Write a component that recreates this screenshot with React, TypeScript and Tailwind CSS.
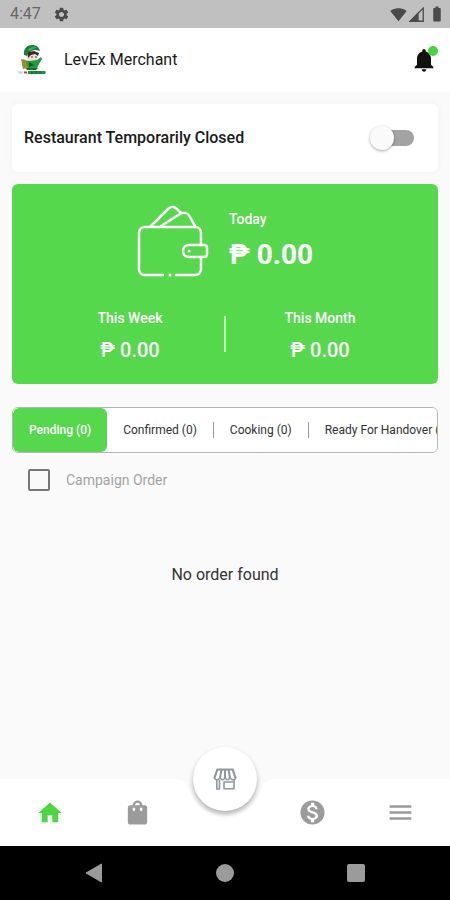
import { useState } from "react";
import type { ReactNode } from "react";
import {
  MdBatteryFull,
  MdHome,
  MdMenu,
  MdMonetizationOn,
  MdNotifications,
  MdSettings,
  MdShoppingBag,
  MdSignalWifi4Bar,
} from "react-icons/md";

function SignalIcon() {
  return (
    <svg width="15" height="15" viewBox="0 0 14 14" aria-hidden="true">
      <path d="M13.3 1v12.3H1z" fill="none" stroke="#4a4a4a" strokeWidth="1.2" />
      <path d="M9 4.5V14H0z" fill="#4a4a4a" />
    </svg>
  );
}

function StatusBar() {
  return (
    <div className="flex h-7 items-center justify-between bg-[#c0c0c0] pr-1 pl-2.5 text-[#4a4a4a]">
      <div className="flex items-center gap-3">
        <span className="text-base text-[#666]">4:47</span>
        <MdSettings size={17} />
      </div>
      <div className="flex items-center gap-0.5">
        <MdSignalWifi4Bar size={17} />
        <SignalIcon />
        <MdBatteryFull size={18} className="ml-0.5" />
      </div>
    </div>
  );
}

function LogoMark() {
  return (
    <svg width="32" height="34" viewBox="0 0 32 34" role="img" aria-label="LevEx logo">
      <path d="M10 13c2-3 11-3 12 1l-2 5-8 1z" fill="#f3dfd2" />
      <path d="M8 12C7 5 12 2 16 2c4 0 7 2 8 6l-4-1c-5 0-6 2-9 6z" fill="#17813a" />
      <path d="M12 7c2-3 6-4 9-2-3 0-6 1-7 3z" fill="#3cb45a" />
      <path d="M12 9l6-1 5 2-1 3-3-2-4 1-3 3z" fill="#43262a" />
      <path d="M15 14l2 0M19 14h2" stroke="#5a3a35" strokeWidth="1" />
      <path d="M7 17l6 1 8-1 4-3 1 2-3 5-2 4H9l-3-3z" fill="#249b3f" />
      <path d="M5 16l5 1 2 8-5 1z" fill="#9a8d2c" />
      <path d="M13 19l5 3-5 2z" fill="#0f5b28" />
      <path d="M10 25h12l-2 2h-9z" fill="#1c6b31" />
      <path d="M2 29h5M3 30h3" stroke="#b9c9bd" strokeWidth="1" />
      <path d="M8 28.5h3v2H8z" fill="#d6353a" />
      <path d="M12 28h17l1 1-1 2H12z" fill="#1f9440" />
      <path d="M16 28v3M20 28v3M24 28v3" stroke="#0d5c25" strokeWidth="1" />
    </svg>
  );
}

function Header() {
  return (
    <header className="flex h-16 items-center bg-white pr-3 pl-4">
      <LogoMark />
      <h1 className="ml-4 flex-1 text-base text-[#1a1a1a]">LevEx Merchant</h1>
      <button type="button" aria-label="Notifications" className="relative text-[#111]">
        <MdNotifications size={28} />
        <span className="absolute top-0 right-0 size-2.5 rounded-full bg-[#43d63f]" />
      </button>
    </header>
  );
}

function ClosedSwitch() {
  const [closed, setClosed] = useState(false);
  return (
    <label className="flex h-17 items-center justify-between rounded-md bg-white pr-6 pl-3 shadow-[0_0_8px_rgba(0,0,0,0.04)]">
      <span className="text-base font-medium text-[#1a1a1a]">Restaurant Temporarily Closed</span>
      <span className="relative flex h-6 w-11 items-center">
        <input
          type="checkbox"
          role="switch"
          checked={closed}
          onChange={(e) => setClosed(e.target.checked)}
          className="peer ml-1 h-4 w-10 appearance-none rounded-full bg-[#a3a3a3] checked:bg-[#9be698]"
        />
        <span className="pointer-events-none absolute top-0 left-0 size-6 rounded-full bg-[#fafafa] shadow-[0_1px_3px_rgba(0,0,0,0.35)] peer-checked:right-0 peer-checked:left-auto" />
      </span>
    </label>
  );
}

function WalletIcon() {
  return (
    <svg width="72" height="72" viewBox="0 0 72 72" fill="none" stroke="white" strokeWidth="2.5" strokeLinecap="round" strokeLinejoin="round" aria-hidden="true">
      <path d="M26 70H8c-4 0-6-3-6-6V28c0-4 3-6 6-6h50c4 0 6 3 6 6v12M64 52v12c0 4-3 6-6 6H39" />
      <path d="M33 70h.1" strokeWidth="3" />
      <path d="M14 21 31 4c3-3 6-3 9 0l4 4" />
      <path d="M24 21 43 9c4-2 8-1 10 3l5 9" />
      <path d="M52 40h15c2 0 3 1 3 3v6c0 2-1 3-3 3H52c-3 0-6-2-6-6s3-6 6-6z" />
      <path d="M52 46h.1" strokeWidth="3" />
    </svg>
  );
}

function PeriodTotal({ label, value }: { label: string; value: string }) {
  return (
    <div className="flex flex-1 flex-col items-center gap-2">
      <span className="text-sm leading-6 font-medium">{label}</span>
      <span className="text-xl leading-6 font-medium">{value}</span>
    </div>
  );
}

function EarningsCard() {
  return (
    <section className="rounded-md bg-[#56d84d] pt-[21px] pb-[22px] text-white">
      <div className="flex items-center justify-center gap-5">
        <WalletIcon />
        <div className="flex flex-col gap-1">
          <span className="text-sm leading-6 font-medium">Today</span>
          <span className="text-[28px] leading-10 font-bold">₱ 0.00</span>
        </div>
      </div>
      <div className="mt-[29px] flex items-center px-6">
        <PeriodTotal label="This Week" value="₱ 0.00" />
        <div className="h-9 w-0.5 bg-white/60" />
        <PeriodTotal label="This Month" value="₱ 0.00" />
      </div>
    </section>
  );
}

const tabs = ["Pending (0)", "Confirmed (0)", "Cooking (0)", "Ready For Handover (0)"];

function OrderTabs() {
  const [active, setActive] = useState(0);
  return (
    <div
      role="tablist"
      className="flex h-[46px] items-center overflow-x-auto rounded-md border border-[#b5b5b5] bg-white [scrollbar-width:none]"
    >
      {tabs.map((tab, i) => (
        <div key={tab} className="flex h-full shrink-0 items-center">
          {i > 1 && <span className="h-4 w-px bg-[#9a9a9a]" />}
          <button
            type="button"
            role="tab"
            aria-selected={i === active}
            onClick={() => setActive(i)}
            className={
              i === active
                ? "h-full rounded-md bg-[#56d84d] px-4 text-xs font-medium text-white"
                : "h-full px-4 text-xs text-[#333]"
            }
          >
            {tab}
          </button>
        </div>
      ))}
    </div>
  );
}

function StoreIcon() {
  return (
    <svg width="24" height="24" viewBox="0 0 24 24" fill="none" stroke="#8f989c" aria-hidden="true">
      <path d="M4 2.5h16M4.500 2 1.500 11M19.500 2l3 9" strokeWidth="2.200" />
      <path d="M8.500 2.500 7 11M12 2.500V11M15.500 2.500 17 11" strokeWidth="2" />
      <path d="M1 10.500c1 3 5 3 6 0 1 3 4 3 5 0 1 3 4 3 5 0 1 3 5 3 6 0" strokeWidth="1.400" />
      <path d="M3.800 12v10.500M6.500 13v9.500M3 22h4" strokeWidth="1.600" />
      <path d="M11 14.500V21.800h10V12.500M11 15h9" strokeWidth="1.600" />
    </svg>
  );
}

function NavButton({ label, active, children }: { label: string; active?: boolean; children: ReactNode }) {
  return (
    <button
      type="button"
      aria-label={label}
      className={active ? "flex items-center justify-center text-[#4ad842]" : "flex items-center justify-center text-[#9b9b9b]"}
    >
      {children}
    </button>
  );
}

function BottomNav() {
  return (
    <nav className="relative h-[67px]">
      <div className="absolute inset-0 flex" aria-hidden="true">
        <div className="flex-1 bg-white" />
        <svg width="104" height="67" viewBox="0 0 104 67">
          <path d="M0 0c9 0 14 4 16 10 5 16 19 27 36 27s31-11 36-27c2-6 7-10 16-10v67H0z" fill="white" />
        </svg>
        <div className="flex-1 bg-white" />
      </div>
      <div className="relative grid h-full grid-cols-5 px-1.5">
        <NavButton label="Home" active>
          <MdHome size={28} />
        </NavButton>
        <NavButton label="Orders">
          <MdShoppingBag size={29} />
        </NavButton>
        <div className="flex justify-center">
          <button
            type="button"
            aria-label="Store"
            className="-mt-8 flex size-16 items-center justify-center rounded-full bg-white shadow-[0_3px_5px_rgba(0,0,0,0.3)]"
          >
            <StoreIcon />
          </button>
        </div>
        <NavButton label="Earnings">
          <MdMonetizationOn size={29} />
        </NavButton>
        <NavButton label="Menu">
          <MdMenu size={29} />
        </NavButton>
      </div>
    </nav>
  );
}

function SystemBar() {
  return (
    <div className="grid h-[54px] grid-cols-3 bg-black px-7">
      <button type="button" aria-label="Back" className="flex items-center justify-center">
        <svg width="18" height="20" viewBox="0 0 18 20">
          <path d="M16.5 1v18L1 10z" fill="#9b9b9b" stroke="#9b9b9b" strokeLinejoin="round" />
        </svg>
      </button>
      <button type="button" aria-label="Home screen" className="flex items-center justify-center">
        <span className="size-[18px] rounded-full bg-[#9b9b9b]" />
      </button>
      <button type="button" aria-label="Recent apps" className="flex items-center justify-center">
        <span className="size-[18px] rounded-xs bg-[#9b9b9b]" />
      </button>
    </div>
  );
}

export default function App() {
  return (
    <div className="flex min-h-screen flex-col bg-[#fafafa] font-['Roboto',sans-serif]">
      <StatusBar />
      <Header />
      <main className="flex flex-1 flex-col px-3 pt-3">
        <ClosedSwitch />
        <div className="mt-3">
          <EarningsCard />
        </div>
        <div className="mt-[23px]">
          <OrderTabs />
        </div>
        <label className="mt-4 flex items-center gap-4 pl-4">
          <input type="checkbox" className="size-[22px] appearance-none rounded-xs border-2 border-[#777] checked:bg-[#56d84d]" />
          <span className="text-sm text-[#a3a3a3]">Campaign Order</span>
        </label>
        <p className="mt-18 text-center text-base text-[#333]">No order found</p>
      </main>
      <BottomNav />
      <SystemBar />
    </div>
  );
}
